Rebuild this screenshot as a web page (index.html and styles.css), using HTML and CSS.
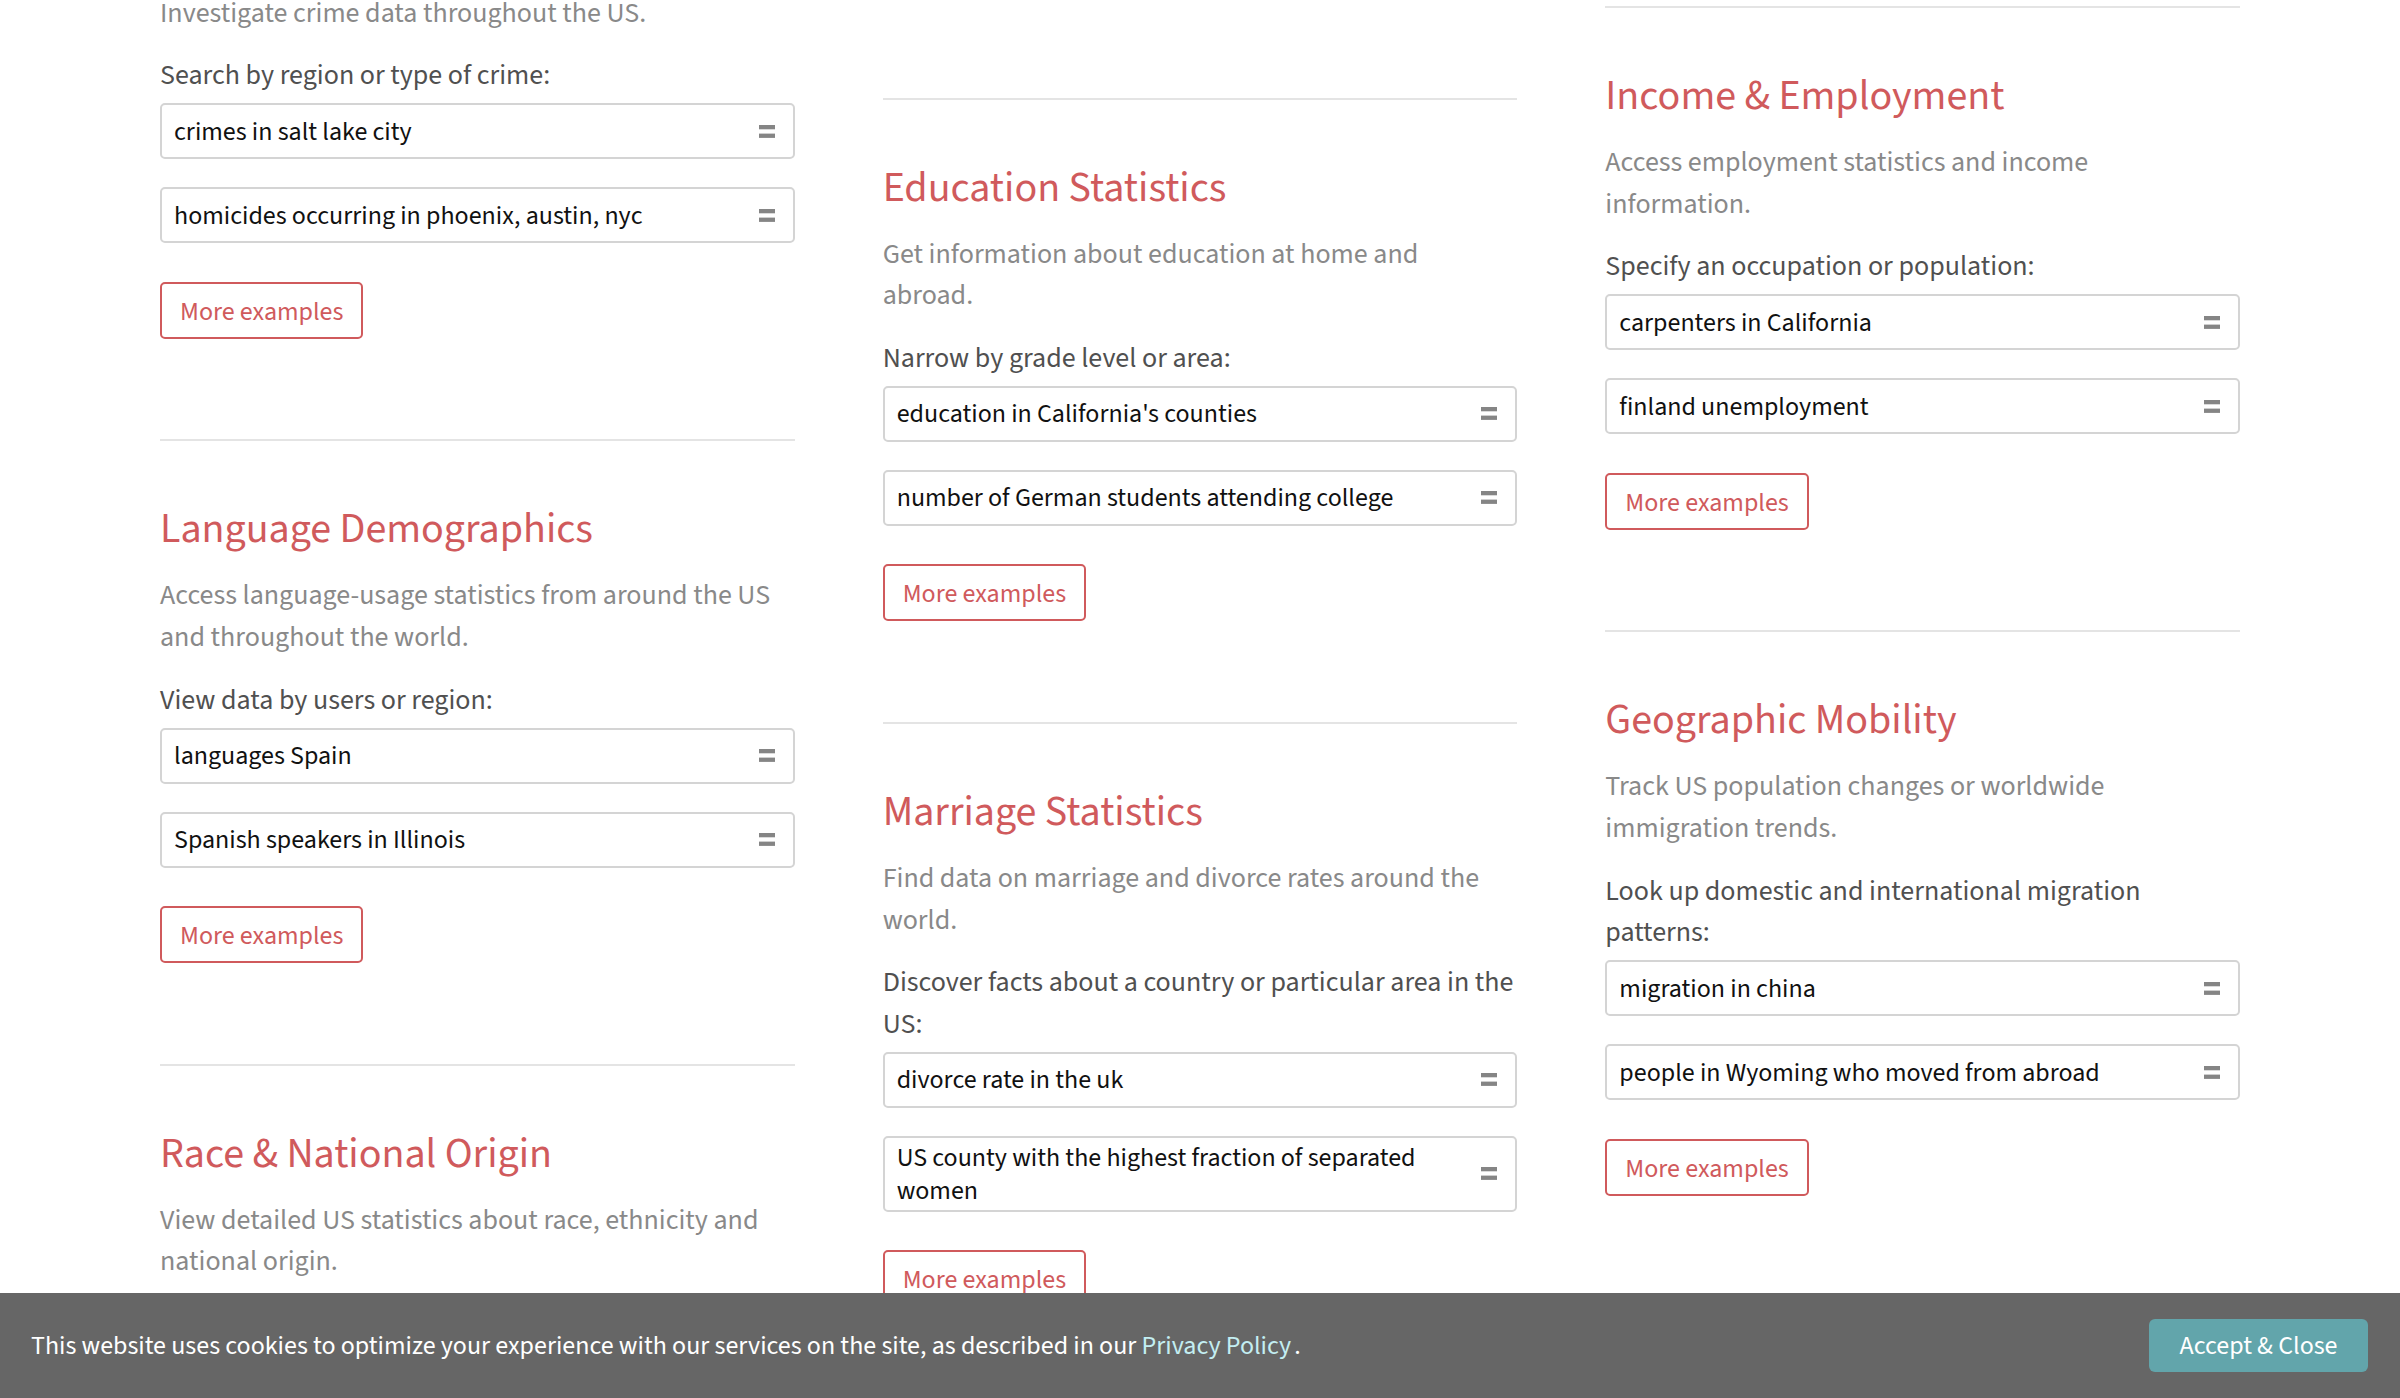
FILE: index.html
```html
<!DOCTYPE html>
<html lang="en">
<head>
<meta charset="utf-8">
<title>Socioeconomic Data Examples</title>
<link rel="stylesheet" href="styles.css">
</head>
<body>
<main class="page">
  <div class="col col-a">
    <section class="topic topic-continued">
      <p class="topic-desc">Investigate crime data throughout the US.</p>
      <p class="topic-label">Search by region or type of crime:</p>
      <div class="examples">
        <a class="example" href="#"><span class="example-text">crimes in salt lake city</span><svg class="eq" viewBox="0 0 16 13" width="16" height="13"><rect x="0" y="0" width="16" height="4.3"/><rect x="0" y="8.6" width="16" height="4.3"/></svg></a>
        <a class="example" href="#"><span class="example-text">homicides occurring in phoenix, austin, nyc</span><svg class="eq" viewBox="0 0 16 13" width="16" height="13"><rect x="0" y="0" width="16" height="4.3"/><rect x="0" y="8.6" width="16" height="4.3"/></svg></a>
      </div>
      <a class="more" href="#">More examples</a>
    </section>
    <section class="topic">
      <h2 class="topic-title">Language Demographics</h2>
      <p class="topic-desc">Access language-usage statistics from around the US and throughout the world.</p>
      <p class="topic-label">View data by users or region:</p>
      <div class="examples">
        <a class="example" href="#"><span class="example-text">languages Spain</span><svg class="eq" viewBox="0 0 16 13" width="16" height="13"><rect x="0" y="0" width="16" height="4.3"/><rect x="0" y="8.6" width="16" height="4.3"/></svg></a>
        <a class="example" href="#"><span class="example-text">Spanish speakers in Illinois</span><svg class="eq" viewBox="0 0 16 13" width="16" height="13"><rect x="0" y="0" width="16" height="4.3"/><rect x="0" y="8.6" width="16" height="4.3"/></svg></a>
      </div>
      <a class="more" href="#">More examples</a>
    </section>
    <section class="topic">
      <h2 class="topic-title">Race &amp; National Origin</h2>
      <p class="topic-desc">View detailed US statistics about race, ethnicity and national origin.</p>
    </section>
  </div>

  <div class="col col-b">
    <section class="topic">
      <h2 class="topic-title">Education Statistics</h2>
      <p class="topic-desc">Get information about education at home and abroad.</p>
      <p class="topic-label">Narrow by grade level or area:</p>
      <div class="examples">
        <a class="example" href="#"><span class="example-text">education in California's counties</span><svg class="eq" viewBox="0 0 16 13" width="16" height="13"><rect x="0" y="0" width="16" height="4.3"/><rect x="0" y="8.6" width="16" height="4.3"/></svg></a>
        <a class="example" href="#"><span class="example-text">number of German students attending college</span><svg class="eq" viewBox="0 0 16 13" width="16" height="13"><rect x="0" y="0" width="16" height="4.3"/><rect x="0" y="8.6" width="16" height="4.3"/></svg></a>
      </div>
      <a class="more" href="#">More examples</a>
    </section>
    <section class="topic">
      <h2 class="topic-title">Marriage Statistics</h2>
      <p class="topic-desc">Find data on marriage and divorce rates around the world.</p>
      <p class="topic-label">Discover facts about a country or particular area in the US:</p>
      <div class="examples">
        <a class="example" href="#"><span class="example-text">divorce rate in the uk</span><svg class="eq" viewBox="0 0 16 13" width="16" height="13"><rect x="0" y="0" width="16" height="4.3"/><rect x="0" y="8.6" width="16" height="4.3"/></svg></a>
        <a class="example" href="#"><span class="example-text">US county with the highest fraction of separated women</span><svg class="eq" viewBox="0 0 16 13" width="16" height="13"><rect x="0" y="0" width="16" height="4.3"/><rect x="0" y="8.6" width="16" height="4.3"/></svg></a>
      </div>
      <a class="more" href="#">More examples</a>
    </section>
  </div>

  <div class="col col-c">
    <section class="topic">
      <h2 class="topic-title">Income &amp; Employment</h2>
      <p class="topic-desc">Access employment statistics and income information.</p>
      <p class="topic-label">Specify an occupation or population:</p>
      <div class="examples">
        <a class="example" href="#"><span class="example-text">carpenters in California</span><svg class="eq" viewBox="0 0 16 13" width="16" height="13"><rect x="0" y="0" width="16" height="4.3"/><rect x="0" y="8.6" width="16" height="4.3"/></svg></a>
        <a class="example" href="#"><span class="example-text">finland unemployment</span><svg class="eq" viewBox="0 0 16 13" width="16" height="13"><rect x="0" y="0" width="16" height="4.3"/><rect x="0" y="8.6" width="16" height="4.3"/></svg></a>
      </div>
      <a class="more" href="#">More examples</a>
    </section>
    <section class="topic">
      <h2 class="topic-title">Geographic Mobility</h2>
      <p class="topic-desc">Track US population changes or worldwide immigration trends.</p>
      <p class="topic-label">Look up domestic and international migration patterns:</p>
      <div class="examples">
        <a class="example" href="#"><span class="example-text">migration in china</span><svg class="eq" viewBox="0 0 16 13" width="16" height="13"><rect x="0" y="0" width="16" height="4.3"/><rect x="0" y="8.6" width="16" height="4.3"/></svg></a>
        <a class="example" href="#"><span class="example-text">people in Wyoming who moved from abroad</span><svg class="eq" viewBox="0 0 16 13" width="16" height="13"><rect x="0" y="0" width="16" height="4.3"/><rect x="0" y="8.6" width="16" height="4.3"/></svg></a>
      </div>
      <a class="more" href="#">More examples</a>
    </section>
  </div>
</main>

<div class="cookie">
  <p class="cookie-text">This website uses cookies to optimize your experience with our services on the site, as described in our <a class="cookie-link" href="#">Privacy Policy</a><span class="cookie-dot">.</span></p>
  <button class="cookie-btn" type="button">Accept &amp; Close</button>
</div>
</body>
</html>
```
FILE: styles.css
```css
html, body {
  margin: 0;
  padding: 0;
  background: #ffffff;
}

body {
  font-family: "Source Sans 3", "Source Sans Pro", Lato, sans-serif;
  color: #111111;
  overflow: hidden;
}

.page {
  width: 2080px;
  margin: -7.5px auto 0;
  display: grid;
  grid-template-columns: repeat(3, 1fr);
  column-gap: 88px;
  align-items: start;
}

.col-b { padding-top: 105px; }
.col-c { padding-top: 13.5px; }

.topic {
  border-top: 2px solid #e4e4e4;
  padding: 63px 0 100.7px;
}

/* section whose heading has scrolled out of view above the page top */
.topic-continued {
  border-top: 0;
  padding-top: 0;
}

.topic-title {
  margin: 0 0 21px;
  font-size: 42px;
  line-height: 50px;
  font-weight: 400;
  color: #d05a5c;
}

.topic-desc {
  max-width: 620px;
  margin: 0 0 21px;
  font-size: 28px;
  line-height: 41.6px;
  color: #898989;
}

.topic-label {
  margin: 0 0 6.5px;
  font-size: 28px;
  line-height: 41.6px;
  color: #505050;
}

.examples {
  display: flex;
  flex-direction: column;
  gap: 28px;
  margin-bottom: 38.5px;
}

.example {
  display: flex;
  align-items: center;
  justify-content: space-between;
  gap: 20px;
  box-sizing: border-box;
  min-height: 56px;
  padding: 3px 18px 3px 12px;
  border: 2px solid #d4d4d4;
  border-radius: 5px;
  font-size: 26px;
  line-height: 33px;
  color: #111111;
  text-decoration: none;
}

.eq {
  flex: none;
  fill: #858585;
}

.more {
  display: inline-flex;
  align-items: center;
  box-sizing: border-box;
  height: 57px;
  padding: 2px 18px 0;
  border: 2px solid #d05a5c;
  border-radius: 5px;
  font-size: 26px;
  line-height: 33px;
  color: #d05a5c;
  text-decoration: none;
}

.cookie {
  position: fixed;
  left: 0;
  right: 0;
  bottom: 0;
  height: 105px;
  box-sizing: border-box;
  padding: 0 32px 0 31px;
  display: flex;
  align-items: center;
  justify-content: space-between;
  background: #666666;
  color: #ffffff;
}

.cookie-text {
  margin: 0;
  font-size: 26px;
  line-height: 34px;
}

.cookie-link {
  color: #c3eef2;
  text-decoration: none;
}

.cookie-dot {
  margin-left: 3px;
}

.cookie-btn {
  box-sizing: border-box;
  width: 219px;
  height: 53px;
  padding: 0;
  border: 0;
  border-radius: 6px;
  background: #62a5ab;
  color: #ffffff;
  font-family: "Source Sans 3", "Source Sans Pro", Lato, sans-serif;
  font-size: 26px;
  line-height: 33px;
}
```
